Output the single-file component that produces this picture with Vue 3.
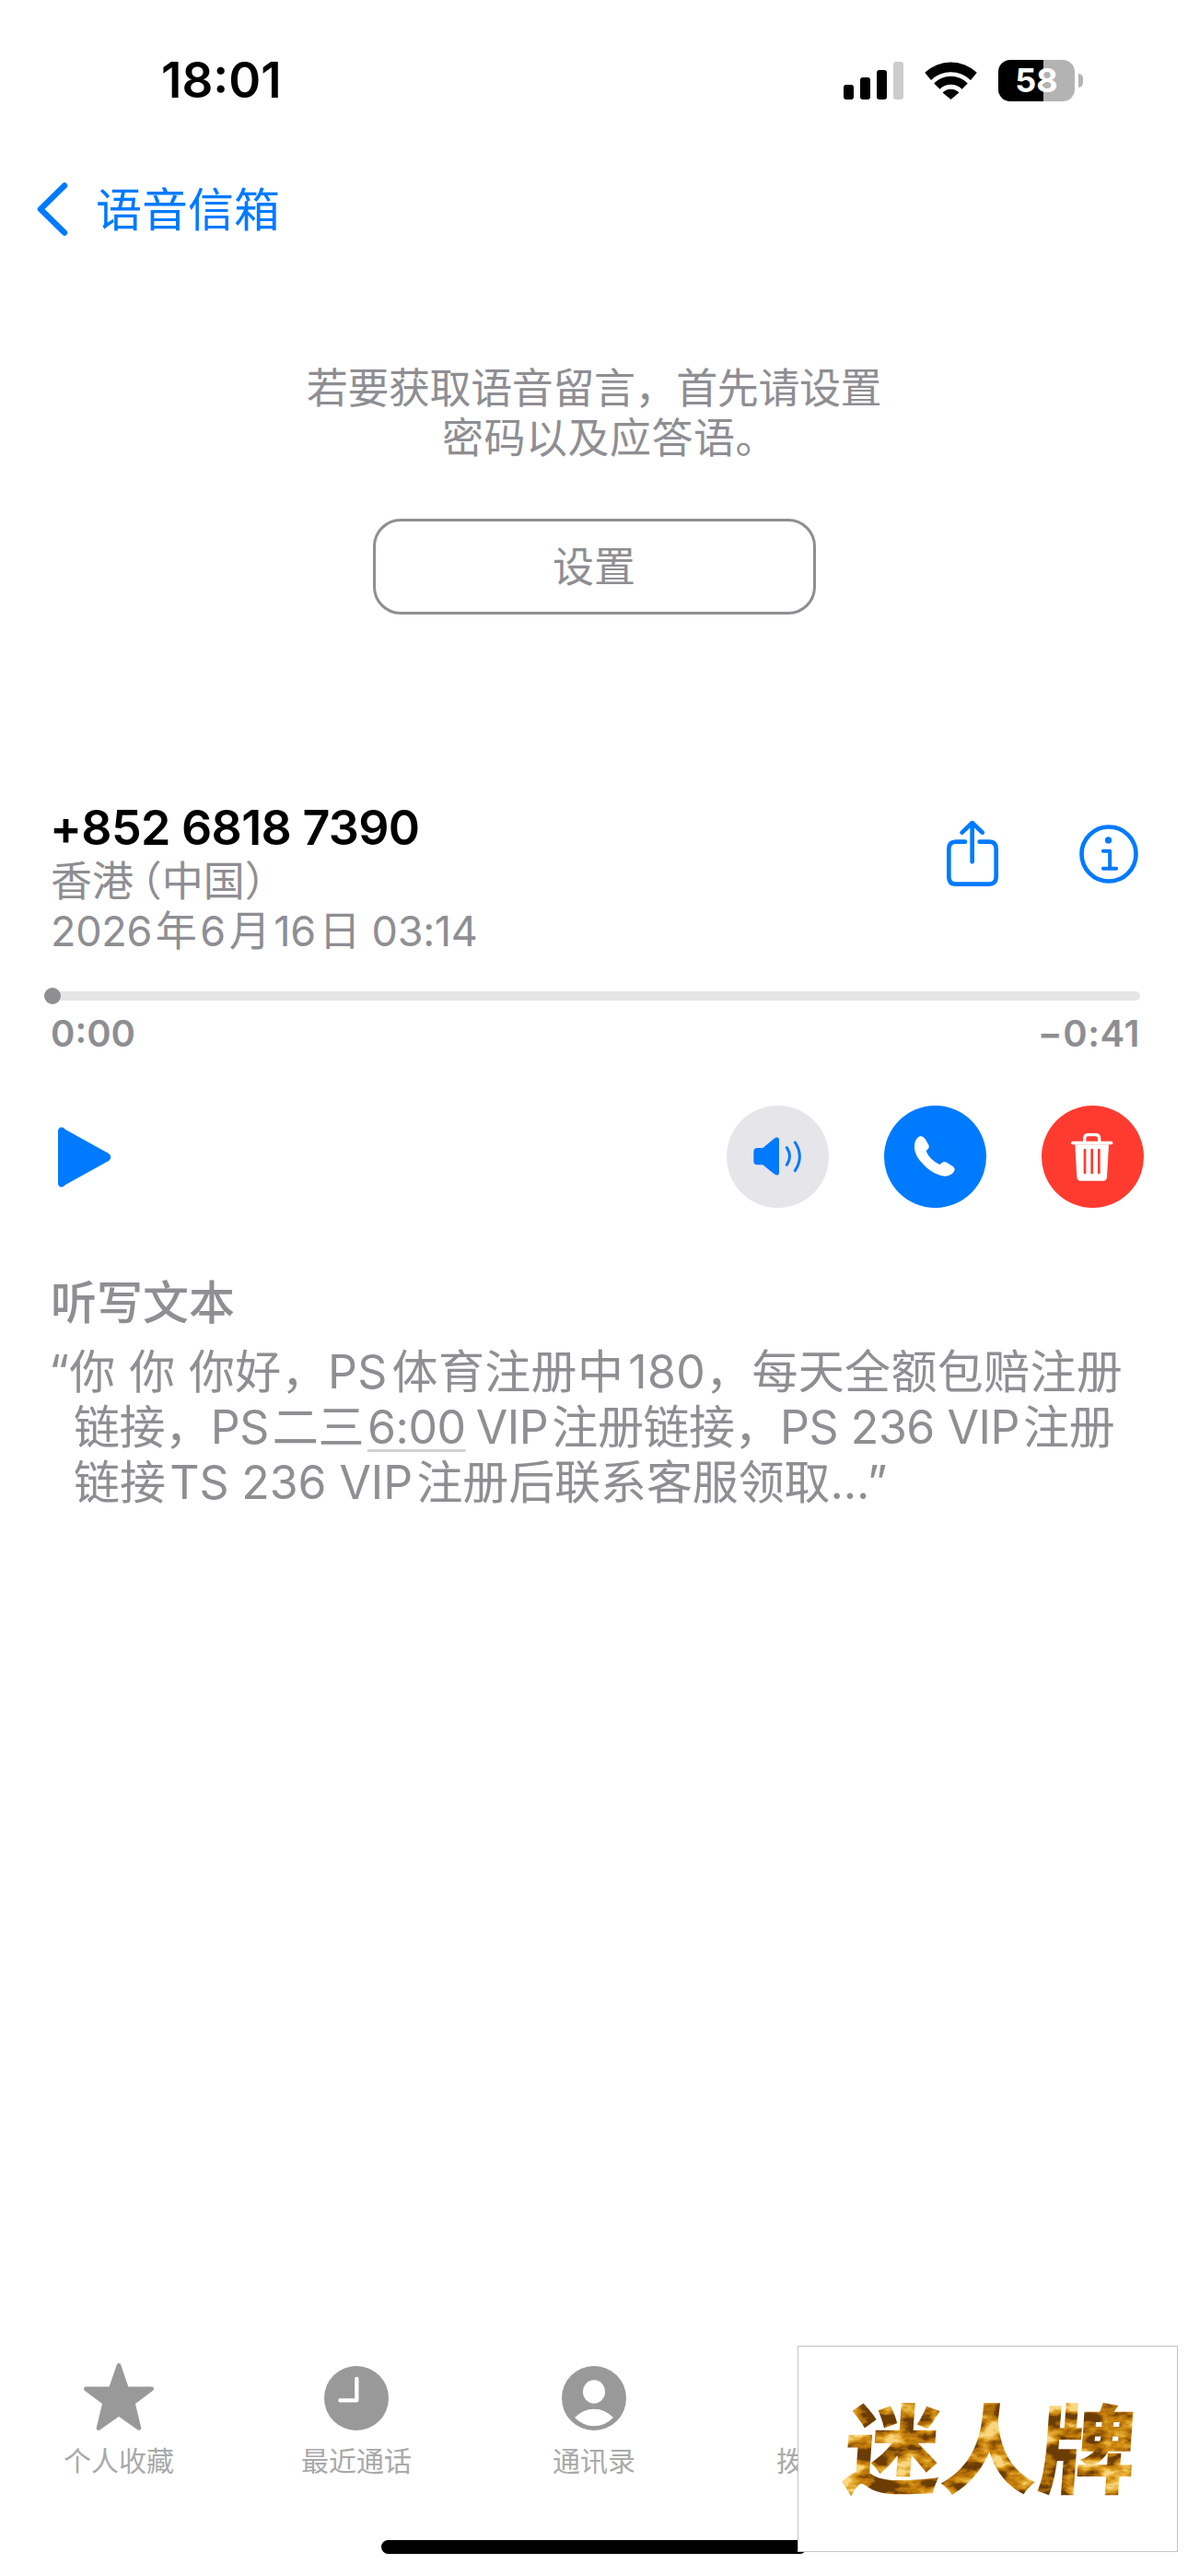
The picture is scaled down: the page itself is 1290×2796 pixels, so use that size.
<script setup>
// données de l'écran (\u200a = petit espace entre chinois et latin)
const lines = [
  { cls: "first", parts: ["“你 你 你好，PS\u200a体育注册中\u200a180，每天全额包赔注册"] },
  { cls: "second", parts: ["链接，PS\u200a二三", "6:00", "\u200aVIP\u200a注册链接，PS 236 VIP\u200a注册"] },
  { cls: "third", parts: ["链接\u200aTS 236 VIP\u200a注册后联系客服领取...”"] },
]
const tabs = ["个人收藏", "最近通话", "通讯录", "拨号键盘", "语音信箱"]
</script>

<template>
  <div class="page">
    <div class="status">
      <span class="clock">18:01</span>
      <div class="status-right">
        <div class="signal">
          <i style="height: 16px"></i>
          <i style="height: 24px"></i>
          <i style="height: 32px"></i>
          <i class="off" style="height: 41px"></i>
        </div>
        <svg class="wifi" viewBox="0 0 57 41" width="57" height="41">
          <path d="M.2 11.8A41 41 0 0 1 56.8 11.8L50 20A30.5 30.5 0 0 0 7 20Z" />
          <path d="M10.2 23.4A25.5 25.5 0 0 1 46.8 23.4L40.5 29.8A16.8 16.8 0 0 0 16.5 29.8Z" />
          <path d="M19.5 33.5A12.5 12.5 0 0 1 37.5 33.5L28.5 41Z" />
        </svg>
        <div class="battery">58</div>
        <div class="nub"></div>
      </div>
    </div>

    <div class="nav">
      <svg viewBox="0 0 36 58" width="36" height="58" class="chevron">
        <path d="M31 3.5L5 29L31 54.5" />
      </svg>
      <span class="nav-title">语音信箱</span>
    </div>

    <div class="prompt">
      <div class="prompt-a">若要获取语音留言，首先请设置</div>
      <div class="prompt-b">密码以及应答语。</div>
    </div>
    <div class="setup">设置</div>

    <div class="caller">
      <div>
        <div class="number">+852 6818 7390</div>
        <div class="meta region">香港&#8201;（中国）</div>
        <div class="meta date">2026&#8202;年&#8202;6&#8202;月&#8202;16&#8202;日 03:14</div>
      </div>
      <div class="caller-icons">
        <svg viewBox="385 92 168 213" width="56" height="71" class="line-icon">
          <path d="M445 160H415Q392 160 392 183V275Q392 298 415 298H523Q546 298 546 275V183Q546 160 523 160H492" />
          <path d="M468 225V100M435 130L468 98L501 130" />
        </svg>
        <svg viewBox="814 105 193 193" width="64" height="64" class="line-icon info">
          <circle cx="910.5" cy="201.5" r="89" />
          <path d="M892 192H914V249M892 249H935" stroke-width="12" />
          <circle class="dot" cx="909" cy="156" r="11" />
        </svg>
      </div>
    </div>

    <div class="track">
      <div class="thumb"></div>
    </div>
    <div class="times">
      <span>0:00</span>
      <span class="remaining">−0:41</span>
    </div>

    <div class="controls">
      <svg viewBox="0 0 58 66" width="58" height="66">
        <path fill="#007aff" d="M0 5C0 0 5-1 8 3L55 29C58 31.500 58 34.500 55 37L8 63C5 67 0 66 0 61Z" />
      </svg>
      <div class="actions">
        <svg class="round" viewBox="-3 15 333 333">
          <circle cx="163.500" cy="181.500" r="166.500" fill="#e5e5ea" />
          <path fill="#007aff" d="M85 165Q85 153 97 153H115L152 122Q168 112 168 128V232Q168 248 152 238L115 208H97Q85 208 85 196Z" />
          <path fill="none" stroke="#007aff" stroke-width="9" stroke-linecap="round" d="M193 152Q212 180 193 208M220 135Q250 180 220 227" />
        </svg>
        <svg class="round" viewBox="510 15 333 333">
          <circle cx="676.500" cy="181.500" r="166.500" fill="#007aff" />
          <path fill="#fff" d="M627 115C634 113 640 118 644 124L655 143C658 149 656 153 651 158L647 163C650 172 658 184 668 192C675 198 683 203 691 207L699 201C704 197 709 197 714 200L733 212C740 217 742 222 738 229C732 240 720 245 708 245C680 243 650 222 630 198C615 180 607 160 609 145C610 130 617 119 627 115Z" />
        </svg>
        <svg class="round" viewBox="3 15 333 333">
          <circle cx="169.500" cy="181.500" r="166.500" fill="#ff3b30" />
          <rect x="99" y="131" width="136" height="11" rx="5" fill="#fff" />
          <path fill="none" stroke="#fff" stroke-width="10" d="M143 135V122Q143 110 155 110H179Q191 110 191 122V135" />
          <path fill="#fff" d="M112 142H222L216 248Q215 260 203 260H131Q119 260 118 248Z" />
          <rect x="140" y="155" width="8" height="83" rx="4" fill="#ff3b30" />
          <rect x="163" y="155" width="8" height="83" rx="4" fill="#ff3b30" />
          <rect x="186" y="155" width="8" height="83" rx="4" fill="#ff3b30" />
        </svg>
      </div>
    </div>

    <div class="heading">听写文本</div>
    <div class="transcript">
      <div v-for="line in lines" :key="line.cls" :class="line.cls">
        <template v-for="(part, j) in line.parts" :key="j">
          <span :class="{ link: part === '6:00' }">{{ part }}</span>
        </template>
      </div>
    </div>

    <div class="tabbar">
      <div v-for="(label, i) in tabs" :key="label" class="tab">
        <div class="tab-icon">
          <svg v-if="i === 0" viewBox="30 27 228 218" width="76" height="73">
            <path fill="#999" stroke="#999" stroke-width="14" stroke-linejoin="round" d="M144 34L170 110H251L190 156L210 238L144 192L78 238L98 156L37 110H118Z" />
          </svg>
          <svg v-else-if="i === 1" viewBox="815 38 210 210" width="70" height="70">
            <circle cx="920" cy="143" r="105" fill="#999" />
            <path fill="none" stroke="#fff" stroke-width="13" stroke-linecap="round" stroke-linejoin="round" d="M921 80V150H867" />
          </svg>
          <svg v-else-if="i === 2" viewBox="30 38 210 210" width="70" height="70">
            <circle cx="135" cy="143" r="105" fill="#999" />
            <ellipse cx="135" cy="122" rx="36" ry="38" fill="#fff" />
            <path fill="#fff" d="M72 206Q100 178 135 178Q170 178 198 206Q170 234 135 234Q100 234 72 206Z" />
          </svg>
        </div>
        <div class="tab-label">{{ label }}</div>
      </div>
    </div>
    <div class="home"></div>

    <!-- encart publicitaire par-dessus la barre -->
    <div class="ad">
      <svg viewBox="0 0 413 224" width="411" height="222">
        <defs>
          <filter id="gold" x="0" y="0" width="100%" height="100%" color-interpolation-filters="sRGB">
            <feTurbulence type="fractalNoise" baseFrequency="0.03 0.055" numOctaves="4" seed="11" />
            <feColorMatrix type="matrix" values="3 0 0 0 -1.1  3 0 0 0 -1.1  3 0 0 0 -1.1  0 0 0 0 1" />
            <feComponentTransfer>
              <feFuncR type="table" tableValues="0.42 0.68 0.8 0.9 0.98" />
              <feFuncG type="table" tableValues="0.24 0.42 0.53 0.68 0.84" />
              <feFuncB type="table" tableValues="0.02 0.03 0.06 0.2 0.5" />
            </feComponentTransfer>
            <feComposite in2="SourceAlpha" operator="in" />
          </filter>
        </defs>
        <g filter="url(#gold)">
          <text class="logo" x="57" y="152" transform="skewX(-4)" textLength="320" lengthAdjust="spacingAndGlyphs">迷人牌</text>
        </g>
      </svg>
    </div>
  </div>
</template>

<style scoped>
.page {
  position: relative;
  width: 1290px;
  height: 2796px;
  background: #fff;
  display: flex;
  flex-direction: column;
  font-family: Inter, "Noto Sans CJK SC", sans-serif;
  color: #8e8e93;
  overflow: hidden;
}

.status {
  height: 174px;
  padding: 0 114px 0 175px;
  display: flex;
  justify-content: space-between;
  align-items: center;
  box-sizing: border-box;
}

.clock {
  font-size: 53px;
  font-weight: 600;
  color: #000;
}

.status-right {
  display: flex;
  align-items: center;
}

.signal {
  display: flex;
  align-items: flex-end;
  gap: 7px;
  height: 41px;
  margin-right: 23px;
}

.signal i {
  display: block;
  width: 11px;
  background: #000;
  border-radius: 3px;
}

.signal .off {
  background: #ccc;
}

.wifi {
  fill: #000;
  margin-right: 23px;
}

.battery {
  width: 83px;
  height: 45px;
  line-height: 45px;
  border-radius: 13px;
  background: linear-gradient(to right, #000 59%, #b3b3b3 59%);
  color: #fff;
  font-size: 36px;
  font-weight: 700;
  text-align: center;
}

.nub {
  width: 5px;
  height: 15px;
  margin-left: 4px;
  background: #b3b3b3;
  border-radius: 0 8px 8px 0;
}

.nav {
  height: 106px;
  padding-left: 39px;
  display: flex;
  align-items: center;
  gap: 29px;
  font-size: 50px;
  color: #007aff;
}

.nav-title {
  margin-top: -6px;
}

.chevron {
  fill: none;
  stroke: #007aff;
  stroke-width: 6.500;
  stroke-linecap: round;
  stroke-linejoin: round;
}

.prompt {
  margin-top: 115px;
  font-size: 45px;
  line-height: 54px;
  text-align: center;
}

.prompt-a {
  letter-spacing: -0.4px;
}

.prompt-b {
  padding-left: 34px;
  letter-spacing: 0.5px;
}

.setup {
  align-self: center;
  margin-top: 60px;
  width: 481px;
  height: 104px;
  box-sizing: border-box;
  border: 3px solid #8e8e93;
  border-radius: 30px;
  font-size: 45px;
  line-height: 100px;
  text-align: center;
}

.caller {
  margin-top: 202px;
  padding: 0 54px 0 55px;
  display: flex;
  justify-content: space-between;
}

.number {
  margin-left: -1px;
  font-size: 52px;
  line-height: 60px;
  font-weight: 600;
  letter-spacing: -0.7px;
  color: #000;
}

.meta {
  font-size: 45px;
  line-height: 56px;
}

.region {
  font-feature-settings: "halt";
}

.date {
  margin-top: -2px;
  letter-spacing: -0.3px;
}

.caller-icons {
  display: flex;
  align-items: flex-start;
  gap: 88px;
  padding-top: 22px;
}

.line-icon {
  fill: none;
  stroke: #007aff;
  stroke-width: 14;
  stroke-linecap: round;
  stroke-linejoin: round;
}

.info {
  margin-top: 4px;
}

.dot {
  fill: #007aff;
  stroke: none;
}

.track {
  position: relative;
  margin: 37px 52px 0 48px;
  height: 10px;
  background: #e5e5e5;
  border-radius: 5px;
}

.thumb {
  position: absolute;
  left: 0;
  top: -4px;
  width: 18px;
  height: 18px;
  border-radius: 50%;
  background: #8e8e93;
}

.times {
  margin-top: 16px;
  padding: 0 52px 0 55px;
  display: flex;
  justify-content: space-between;
  font-size: 40px;
  line-height: 40px;
  font-weight: 600;
}

.remaining {
  letter-spacing: 0.6px;
}

.controls {
  margin-top: 58px;
  padding: 0 48px 0 63px;
  display: flex;
  justify-content: space-between;
  align-items: center;
}

.actions {
  display: flex;
  gap: 60px;
}

.round {
  display: block;
  width: 111px;
  height: 111px;
}

.heading {
  margin-top: 73px;
  padding-left: 55px;
  font-size: 50px;
  line-height: 60px;
  font-weight: 500;
}

.transcript {
  margin-top: 15px;
  padding-left: 80px;
  font-size: 50px;
  line-height: 60px;
  white-space: pre;
}

.first {
  text-indent: -27px;
  letter-spacing: 0.35px;
}

.second {
  letter-spacing: -0.45px;
}

.third {
  letter-spacing: -0.1px;
}

.link {
  padding: 0 7px 0 4px;
  text-decoration: underline;
  text-decoration-color: #d1d1d6;
  text-decoration-thickness: 3px;
  text-underline-offset: 6px;
}

.tabbar {
  margin-top: auto;
  display: flex;
}

.tab {
  width: 258px;
  display: flex;
  flex-direction: column;
  align-items: center;
}

.tab-icon {
  height: 74px;
  display: flex;
  align-items: flex-end;
}

.tab-label {
  margin-top: 13px;
  font-size: 30px;
  line-height: 40px;
  color: #a9a9a9;
}

.home {
  align-self: flex-start;
  margin: 66px 0 24px 414px;
  width: 462px;
  height: 15px;
  border-radius: 8px;
  background: #000;
}

.ad {
  position: absolute;
  left: 866px;
  top: 2546px;
  width: 413px;
  height: 224px;
  box-sizing: border-box;
  border: 1px solid #c4c4c4;
  background: #fff;
}

.ad svg {
  display: block;
}

.logo {
  font-family: "Noto Sans CJK SC", sans-serif;
  font-size: 106px;
  font-weight: 900;
}
</style>

<style>
body {
  background: #fff;
}
</style>
